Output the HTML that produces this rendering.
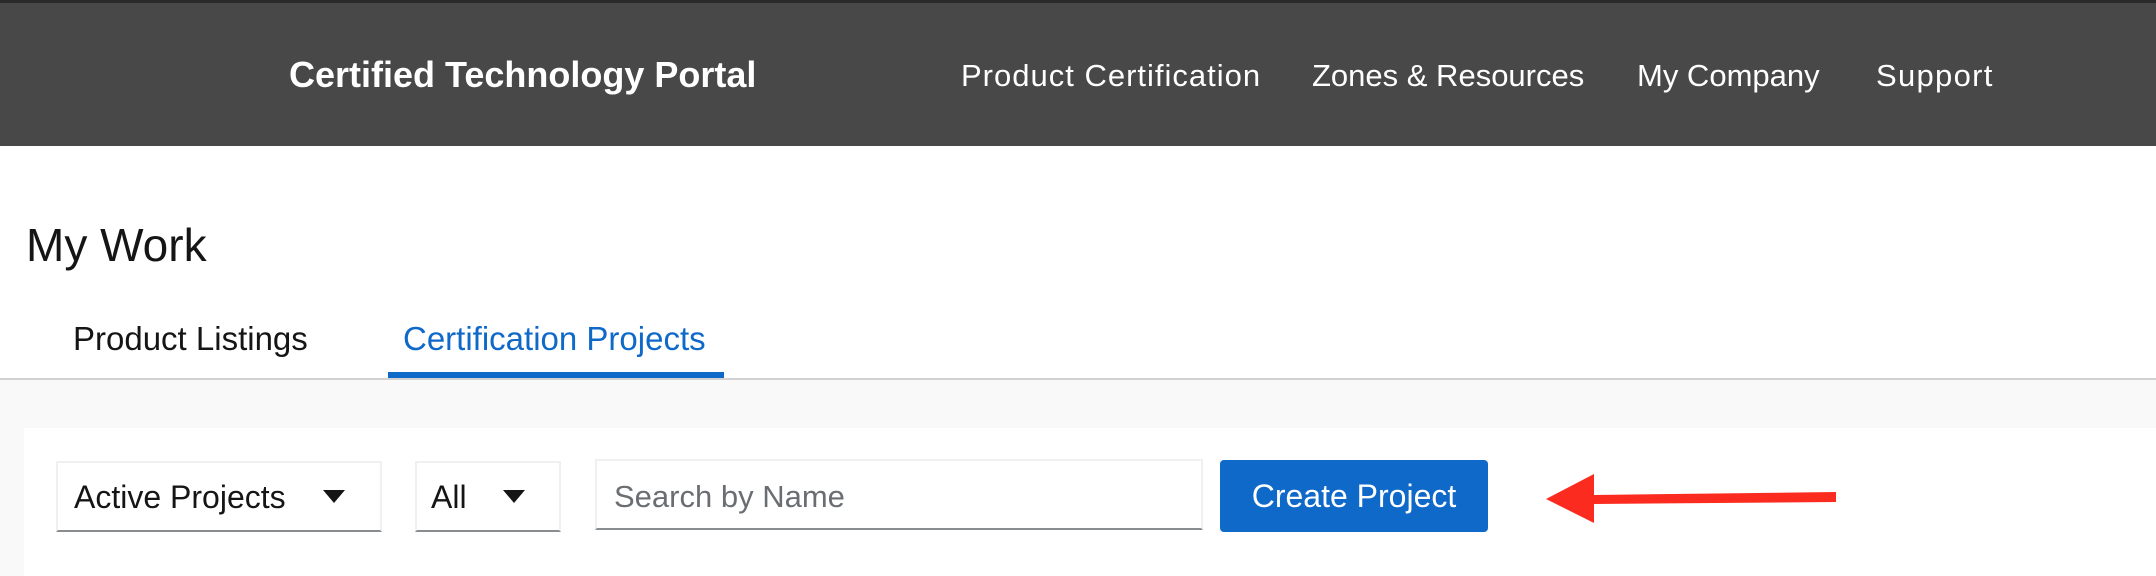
<!DOCTYPE html>
<html><head><meta charset="utf-8"><style>
html,body{margin:0;padding:0;width:2156px;height:576px;overflow:hidden;background:#fff;font-family:"Liberation Sans",sans-serif;position:relative}
.abs{position:absolute;white-space:nowrap}
</style></head><body>
<div class="abs" style="left:0;top:0;width:2156px;height:146px;background:#484848;border-top:3px solid #2a2a2a;box-sizing:border-box"></div>
<div class="abs" style="left:289px;top:54px;font-size:36px;font-weight:bold;color:#fff">Certified Technology Portal</div>
<div class="abs" style="left:961px;top:58px;font-size:31px;color:#fff;letter-spacing:1px">Product Certification</div>
<div class="abs" style="left:1312px;top:58px;font-size:31px;color:#fff">Zones &amp; Resources</div>
<div class="abs" style="left:1637px;top:58px;font-size:31px;color:#fff">My Company</div>
<div class="abs" style="left:1876px;top:58px;font-size:31px;color:#fff;letter-spacing:1.3px">Support</div>

<div class="abs" style="left:26px;top:218px;font-size:46px;color:#151515">My Work</div>
<div class="abs" style="left:73px;top:320px;font-size:33px;color:#151515">Product Listings</div>
<div class="abs" style="left:403px;top:320px;font-size:33px;color:#0f69c9">Certification Projects</div>
<div class="abs" style="left:388px;top:372px;width:336px;height:6px;background:#0f69c9"></div>
<div class="abs" style="left:0;top:378px;width:2156px;height:2px;background:#d2d2d2"></div>
<div class="abs" style="left:0;top:380px;width:2156px;height:196px;background:#f9f9f9"></div>
<div class="abs" style="left:24px;top:428px;width:2132px;height:148px;background:#fff"></div>

<div class="abs" style="left:56px;top:461px;width:326px;height:71px;box-sizing:border-box;border:2px solid #f0f0f0;border-bottom:2px solid #8a8d90;background:#fff"></div>
<div class="abs" style="left:74px;top:479px;font-size:32px;color:#151515">Active Projects</div>
<svg class="abs" style="left:323px;top:490px" width="22" height="13"><path d="M0 0H22L11 13Z" fill="#151515"/></svg>

<div class="abs" style="left:415px;top:461px;width:146px;height:71px;box-sizing:border-box;border:2px solid #f0f0f0;border-bottom:2px solid #8a8d90;background:#fff"></div>
<div class="abs" style="left:431px;top:479px;font-size:32px;color:#151515">All</div>
<svg class="abs" style="left:503px;top:490px" width="22" height="13"><path d="M0 0H22L11 13Z" fill="#151515"/></svg>

<div class="abs" style="left:595px;top:459px;width:608px;height:71px;box-sizing:border-box;border:2px solid #f0f0f0;border-bottom:2px solid #8a8d90;background:#fff"></div>
<div class="abs" style="left:614px;top:479px;font-size:31px;color:#6a6e73">Search by Name</div>

<div class="abs" style="left:1220px;top:460px;width:268px;height:72px;background:#0f69c9;border-radius:4px"></div>
<div class="abs" style="left:1220px;top:478px;width:268px;text-align:center;font-size:32px;color:#fff">Create Project</div>

<svg class="abs" style="left:1540px;top:470px" width="300" height="58"><path d="M6 29L54 4V25L296 22V32L54 34V53Z" fill="#fb2b1f"/></svg>
</body></html>
